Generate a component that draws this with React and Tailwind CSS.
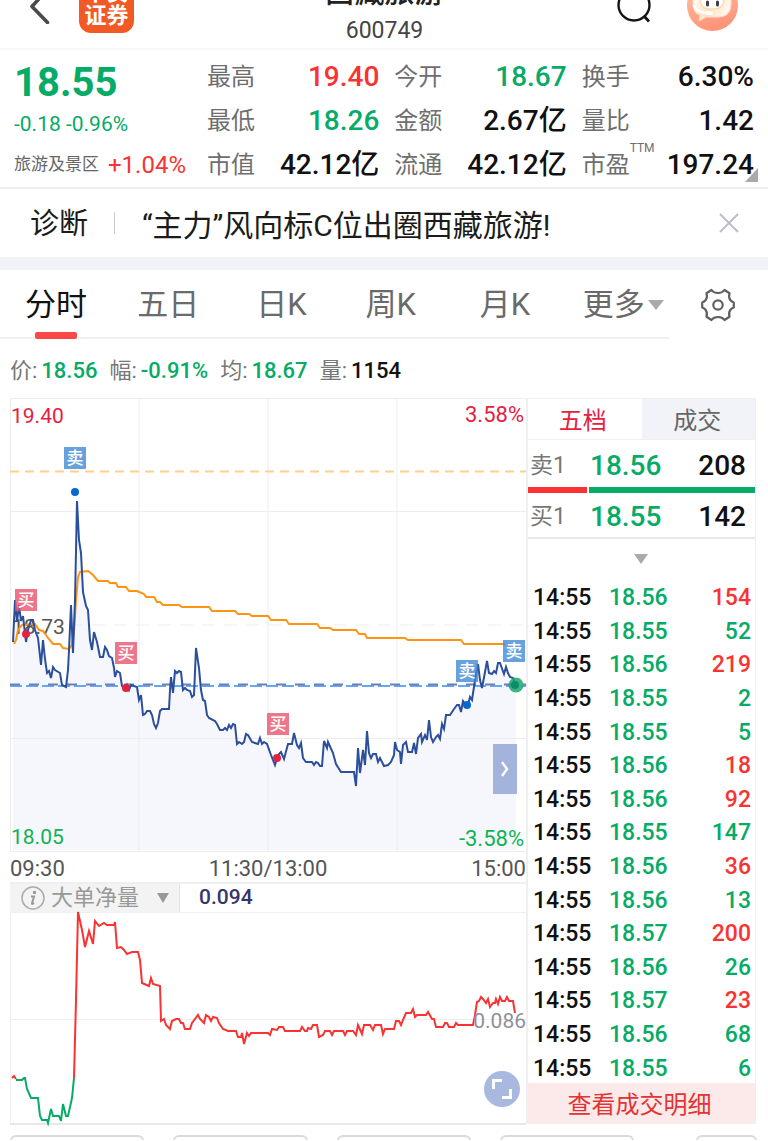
import React, { useState } from 'react';

const UP = 'text-[#fb3232]';
const DOWN = 'text-[#06ab67]';
const PLAIN = 'text-[#111]';

const STATS = [
  { label: '最高', value: '19.40', color: UP },
  { label: '今开', value: '18.67', color: DOWN },
  { label: '换手', value: '6.30%', color: PLAIN },
  { label: '最低', value: '18.26', color: DOWN },
  { label: '金额', value: '2.67亿', color: PLAIN },
  { label: '量比', value: '1.42', color: PLAIN },
  { label: '市值', value: '42.12亿', color: PLAIN },
  { label: '流通', value: '42.12亿', color: PLAIN },
  { label: '市盈', value: '197.24', color: PLAIN, note: 'TTM' },
];

const TABS = ['分时', '五日', '日K', '周K', '月K', '更多'];

const SUMMARY = [
  { label: '价:', value: '18.56', color: DOWN },
  { label: '幅:', value: '-0.91%', color: DOWN },
  { label: '均:', value: '18.67', color: DOWN },
  { label: '量:', value: '1154', color: PLAIN },
];

const TRADES = [
  { price: '18.56', volume: 154, buy: true },
  { price: '18.55', volume: 52 },
  { price: '18.56', volume: 219, buy: true },
  { price: '18.55', volume: 2 },
  { price: '18.55', volume: 5 },
  { price: '18.56', volume: 18, buy: true },
  { price: '18.56', volume: 92, buy: true },
  { price: '18.55', volume: 147 },
  { price: '18.56', volume: 36, buy: true },
  { price: '18.56', volume: 13 },
  { price: '18.57', volume: 200, buy: true },
  { price: '18.56', volume: 26 },
  { price: '18.57', volume: 23, buy: true },
  { price: '18.56', volume: 68 },
  { price: '18.55', volume: 6 },
];

// chart series, in the viewBox units of the two charts
const PRICE_LINE =
  '13,642 15,600 17,622 19,605 21,621 23,616 26,642 28,630 31,620 33,620 35,630 38,638 41,665 43,640 45,659 47,673 49,671 51,678 53,667 55,670 60,673 62,685 66,687 68,670 69,650 71,605 73,653 75,600 77,501 79,540 81,553 83,592 86,606 88,610 90,640 92,650 94,632 97,642 100,657 103,657 105,647 107,650 109,656 112,658 114,668 115,677 117,671 120,673 122,686 125,690 127,685 129,690 131,685 137,687 139,700 141,695 143,715 145,714 147,711 150,711 152,715 154,724 156,728 158,723 160,711 162,709 169,709 170,690 171,677 173,693 175,671 177,673 179,671 181,672 183,690 185,688 187,690 190,691 192,697 194,695 196,648 199,668 201,690 203,700 205,701 207,715 209,718 215,721 217,724 220,730 223,730 225,728 227,730 229,725 231,728 233,724 235,725 237,744 239,742 242,744 244,742 246,734 248,735 252,742 255,743 258,744 260,738 262,744 264,742 267,744 271,755 275,765 278,755 281,752 284,759 288,744 292,744 294,733 297,745 299,748 301,743 303,758 306,762 312,762 314,765 316,762 318,763 320,766 322,766 324,741 327,748 328,742 333,753 336,764 341,772 354,772 356,786 358,748 360,773 363,750 365,765 367,731 369,753 371,758 373,754 376,754 378,762 380,758 384,766 388,765 391,762 394,755 395,742 397,750 400,752 401,764 403,745 406,742 408,752 412,752 414,743 416,754 418,738 421,734 422,742 425,735 427,740 429,720 431,737 433,742 436,737 438,735 440,739 442,724 444,729 446,715 450,715 454,709 457,705 459,705 461,712 463,701 466,705 468,705 470,697 472,700 475,680 478,664 480,680 482,688 485,672 487,661 489,673 492,674 494,671 496,673 498,663 500,663 504,674 506,667 508,673 510,677 513,678 516,684';

const AVERAGE_LINE =
  '14,644 16,640 18,630 22,625 35,624 39,630 43,631 48,638 53,644 60,644 63,648 69,649 72,645 74,632 76,600 78,577 80,572 88,571 93,575 98,581 108,581 110,583 116,583 118,587 126,587 129,591 137,591 144,594 146,597 154,597 157,602 160,602 163,605 179,605 182,607 209,607 212,611 235,611 238,614 249,614 252,616 268,616 271,620 286,620 289,624 317,624 320,628 330,628 333,630 356,630 359,634 365,634 367,638 405,638 408,640 461,640 464,644 505,644';

const FLOW_OUT =
  '16,1080 22,1080 24,1078 25,1078 27,1089 31,1098 38,1098 40,1116 42,1120 47,1120 48,1123 51,1109 53,1116 59,1116 61,1121 63,1104 66,1116 68,1116 70,1107 72,1098 74,1078';

const FLOW_IN =
  '74,1078 76,1000 78,912 82,930 85,947 89,931 93,944 95,921 99,926 104,923 107,925 114,925 115,922 117,948 121,947 124,950 127,954 132,952 138,952 140,960 142,983 149,986 151,978 153,984 160,986 161,1021 164,1019 166,1025 170,1029 172,1021 176,1019 179,1019 181,1023 183,1023 185,1029 190,1029 192,1023 198,1015 200,1019 204,1023 206,1015 209,1017 211,1021 213,1017 217,1018 219,1023 223,1029 228,1031 236,1031 238,1037 241,1037 242,1033 244,1044 247,1033 249,1036 251,1033 268,1033 270,1035 272,1029 277,1030 279,1027 283,1027 285,1031 300,1031 302,1027 305,1031 307,1031 308,1028 311,1029 313,1025 317,1025 319,1037 323,1035 325,1031 330,1031 332,1035 334,1031 343,1031 345,1035 347,1031 353,1031 356,1035 358,1025 362,1034 364,1025 370,1025 373,1030 375,1025 381,1025 383,1034 385,1029 394,1029 396,1021 399,1021 401,1025 403,1020 406,1013 411,1013 413,1009 415,1017 417,1015 426,1015 428,1012 432,1019 434,1019 436,1027 443,1027 445,1023 447,1023 449,1027 454,1027 456,1023 458,1025 473,1025 475,1015 477,1002 479,1001 481,997 483,999 486,1003 488,999 490,1007 493,1003 495,1003 496,999 498,1004 500,997 502,1001 505,1001 507,997 509,1001 513,1001 515,1013';

const MARKERS = [
  { x: 64, y: 447, side: '卖', dot: [75, 492] },
  { x: 15, y: 589, side: '买', dot: [26, 634] },
  { x: 115, y: 642, side: '买', dot: [126, 688] },
  { x: 267, y: 713, side: '买', dot: [277, 758] },
  { x: 456, y: 660, side: '卖', dot: [467, 705] },
  { x: 503, y: 640, side: '卖' },
];

function Header() {
  return (
    <header className="relative flex h-[50px] items-end justify-between overflow-hidden border-b-2 border-[#f7f7f7] pl-[29px] pr-[30px]">
      <div className="flex items-end gap-[29px]">
        <button aria-label="返回" className="mb-[24px]">
          <svg width="21" height="36" viewBox="0 0 21 36" fill="none">
            <path d="M18 2 3 18.500 18.500 34.500" stroke="#4a4a4a" strokeWidth="3.600" strokeLinecap="round" strokeLinejoin="round" />
          </svg>
        </button>
        <div className="mb-[15px] flex h-[56px] w-[55px] flex-col items-center justify-end rounded-[12px] bg-[#f15a24] pb-[6px] text-[22px] font-bold leading-[23px] text-white">
          <span>华安</span>
          <span>证券</span>
        </div>
      </div>
      <div className="ml-[18px] flex flex-col items-center">
        <h1 className="pb-[8px] text-[30px] font-medium leading-[36px] text-[#222]">西藏旅游</h1>
        <p className="pb-[4px] text-[23px] leading-[26px] text-[#444]">600749</p>
      </div>
      <div className="flex items-end gap-[36px]">
        <button aria-label="搜索" className="mb-[24px]">
          <svg width="34" height="36" viewBox="0 0 34 36" fill="none" stroke="#151515" strokeWidth="2.400">
            <circle cx="17" cy="17" r="15.500" />
            <path d="m27 28 5 5.500" strokeWidth="2.800" />
          </svg>
        </button>
        <button aria-label="智能助手" className="mb-[17px]">
          <svg width="51" height="51" viewBox="0 0 51 51">
            <defs>
              <linearGradient id="botBg" x1="0" y1="0" x2="0.300" y2="1">
                <stop offset="0" stopColor="#ffc7ab" />
                <stop offset="1" stopColor="#ff9478" />
              </linearGradient>
              <linearGradient id="botFace" x1="0" y1="0" x2="1" y2="0.300">
                <stop offset="0" stopColor="#ffffff" />
                <stop offset="0.550" stopColor="#ffe3bd" />
                <stop offset="1" stopColor="#fff7ef" />
              </linearGradient>
            </defs>
            <circle cx="25.500" cy="25.500" r="25.500" fill="url(#botBg)" />
            <path d="M6 24c0 6 3 10 7 11l-1 6 7-4h12c8 0 13-4 13-13V14H6z" fill="url(#botFace)" stroke="#ffd9c9" strokeWidth="1" />
            <rect x="13" y="8" width="24" height="21" rx="9" fill="#fff" stroke="#ffd8b8" strokeWidth="1.500" />
            <path d="M20.500 22v3M30.500 22v3" stroke="#40404c" strokeWidth="3" strokeLinecap="round" />
            <path d="M7 26c3 6 9 7 15 7" stroke="#fff" strokeWidth="2.500" strokeLinecap="round" fill="none" />
            <ellipse cx="22" cy="33" rx="4" ry="2" fill="#fff" />
          </svg>
        </button>
      </div>
    </header>
  );
}

function Quote() {
  return (
    <section className="relative flex border-b-2 border-[#ededf3] pl-[14px] pr-[14px]">
      <div className="w-[193px] shrink-0 pt-[8px]">
        <p className={`flex h-[50px] items-center text-[40px] font-bold ${DOWN}`}>18.55</p>
        <p className={`flex h-[34px] items-center text-[21px] ${DOWN}`}>-0.18 -0.96%</p>
        <p className="flex h-[45px] items-center gap-[9px]">
          <span className="text-[17px] text-[#666]">旅游及景区</span>
          <span className={`text-[24px] ${UP}`}>+1.04%</span>
        </p>
      </div>
      <dl className="grid flex-1 grid-cols-3 gap-x-[15px] pt-[5px]">
        {STATS.map((s) => (
          <div key={s.label} className="flex h-[44px] items-center justify-between">
            <dt className="relative text-[24px] text-[#6e6e6e]">
              {s.label}
              {s.note && <sup className="absolute -top-[5px] left-full text-[12px] leading-none">{s.note}</sup>}
            </dt>
            <dd className={`text-[28px] font-medium ${s.color}`}>{s.value}</dd>
          </div>
        ))}
      </dl>
      <span className="absolute bottom-[5px] right-[10px] border-b-[14px] border-l-[13px] border-b-[#aaa] border-l-transparent" />
    </section>
  );
}

function Diagnosis() {
  return (
    <section className="flex h-[68px] items-center pl-[30px] pr-[29px] text-[#1b1b1b]">
      <span className="pt-[4px] text-[29px]">诊断</span>
      <span className="ml-[26px] mr-[27px] h-[22px] w-px bg-[#ccc]" />
      <a href="#diagnosis" className="pt-[4px] text-[30px]">“主力”风向标C位出圈西藏旅游!</a>
      <button aria-label="关闭" className="ml-auto">
        <svg width="20" height="20" viewBox="0 0 20 20" stroke="#bcbccd" strokeWidth="2">
          <path d="m1 1 18 18M19 1 1 19" />
        </svg>
      </button>
    </section>
  );
}

function PeriodTabs() {
  const [active, setActive] = useState('分时');

  return (
    <nav className="flex h-[69px] border-t-[13px] border-[#f2f3f9] box-content">
      <div className="grid flex-1 grid-cols-[112fr_119fr_109fr_114fr_103fr_86fr] border-b-2 border-[#f0f0f0] pl-[25px]">
        {TABS.map((tab) => (
          <button
            key={tab}
            onClick={() => setActive(tab)}
            className={`relative flex items-center justify-self-start pt-[3px] text-[31px] ${active === tab ? 'text-[#111]' : 'text-[#6a6a6a]'}`}
          >
            {tab}
            {tab === '更多' && (
              <span className="ml-[3px] border-x-[8px] border-t-[10px] border-x-transparent border-t-[#aaa]" />
            )}
            {active === tab && (
              <span className="absolute inset-x-[10px] -bottom-[2px] h-[7px] rounded-[2px] bg-[#f94848]" />
            )}
          </button>
        ))}
      </div>
      <button aria-label="设置" className="ml-[32px] mr-[33px] self-center">
        <svg width="34" height="34" viewBox="0 0 34 34" fill="none" stroke="#606060" strokeWidth="2.200" strokeLinejoin="round">
          <path d="M10.500 2c1.500 2.200 3.800 3 6.500 3s5-.8 6.500-3l5 3.200c-.8 2.800-.5 5 .8 6.800 1 1.300 2 2.100 3.500 2.500v5c-1.500.4-2.500 1.200-3.500 2.500-1.300 1.800-1.600 4-.8 6.800l-5 3.200c-1.500-2.200-3.800-3-6.500-3s-5 .8-6.500 3l-5-3.200c.8-2.800.5-5-.8-6.800-1-1.300-2-2.100-3.500-2.500v-5c1.500-.4 2.500-1.200 3.500-2.500 1.300-1.800 1.600-4 .8-6.800z" />
          <circle cx="17" cy="17" r="4.700" />
        </svg>
      </button>
    </nav>
  );
}

function PriceChart() {
  return (
    <div className="relative">
      <svg viewBox="10 398 516 454" className="block w-full">
        <polygon points={`13,850 ${PRICE_LINE} 516,850`} fill="#f5f7fc" />
        <g stroke="#ededed" strokeWidth="1" fill="none">
          <path d="M10 398.500H526M10 511.500H526M10 738.500H526M10 851.500H526" />
          <path d="M10.500 398V852M139 398V852M268 398V852M397 398V852" />
          <path d="M70 625H526" strokeDasharray="13 9" />
        </g>
        <path d="M10 471.500H526" stroke="#ffcf8c" strokeWidth="2" strokeDasharray="9 6" />
        <path d="M10 686H526" stroke="#62a8f7" strokeWidth="2" strokeDasharray="12 4" />
        <path d="M10 684.500H526" stroke="#6f7fb5" strokeWidth="2" strokeDasharray="10 9" />
        <text x="12" y="634" fontSize="21" fill="#555">18.73</text>
        <polyline points={AVERAGE_LINE} fill="none" stroke="#ff9412" strokeWidth="2" />
        <polyline points={PRICE_LINE} fill="none" stroke="#2b4f9b" strokeWidth="2" />
        <circle cx="516" cy="685" r="7.500" fill="#1aa86c" fillOpacity="0.850" />
        <circle cx="515" cy="685" r="4" fill="#0e8b6b" />
        {MARKERS.map((m) => (
          <g key={`${m.x}-${m.y}`}>
            <rect
              x={m.x}
              y={m.y}
              width="22"
              height="22"
              fill={m.side === '买' ? '#e8506a' : '#3d88d5'}
              fillOpacity="0.780"
            />
            <text x={m.x + 11} y={m.y + 17} fontSize="17" fontWeight="500" textAnchor="middle" fill="#fff">{m.side}</text>
            {m.dot && <circle cx={m.dot[0]} cy={m.dot[1]} r="4" fill={m.side === '买' ? '#e6213f' : '#0868cf'} />}
          </g>
        ))}
      </svg>
      <span className="absolute left-px top-[6px] text-[21px] leading-[24px] text-[#e6213f]">19.40</span>
      <span className="absolute right-[2px] top-[5px] text-[22px] leading-[24px] text-[#e6213f]">3.58%</span>
      <span className="absolute bottom-[3px] left-px text-[21px] leading-[24px] text-[#0fb351]">18.05</span>
      <span className="absolute bottom-[1px] right-[2px] text-[22px] leading-[24px] text-[#0fb351]">-3.58%</span>
      <button aria-label="展开" className="absolute bottom-[58px] right-[9px] flex h-[50px] w-[24px] items-center justify-center bg-[#a4b3dc]">
        <svg width="8" height="16" viewBox="0 0 8 16" fill="none" stroke="#fff" strokeWidth="2.400">
          <path d="m1 1 5 7-5 7" />
        </svg>
      </button>
    </div>
  );
}

function FlowChart() {
  return (
    <>
      <div className="flex h-[31px] items-center border-b border-t-2 border-[#efefef]">
        <div className="relative flex h-full w-[170px] items-center border-r border-[#e5e5e5] bg-[#f3f3f3] pl-[11px]">
          <svg width="24" height="24" viewBox="0 0 24 24" fill="none" stroke="#aaa" strokeWidth="1.500" aria-hidden="true">
            <circle cx="12" cy="12" r="11" />
            <path d="M10 10.500h3l-2 7q0 1 2-.5" stroke="#999" strokeWidth="2" />
            <circle cx="13.500" cy="6.500" r="1" fill="#999" stroke="#999" />
          </svg>
          <select aria-label="指标" className="ml-[6px] w-[118px] appearance-none bg-transparent text-[22px] leading-[28px] text-[#999]">
            <option>大单净量</option>
          </select>
          <span className="pointer-events-none absolute right-[10px] border-x-[6px] border-t-[10px] border-x-transparent border-t-[#999]" />
        </div>
        <span className="ml-[19px] text-[21px] font-medium text-[#37356a]">0.094</span>
      </div>
      <div className="relative">
        <svg viewBox="10 913 516 211" className="block w-full overflow-visible">
          <path d="M10.500 913V1124M10 1019.500H526" stroke="#efefef" fill="none" />
          <path d="M10 1124H526" stroke="#e8e8e8" strokeWidth="2" />
          <polyline points="12,1078 14,1076 16,1079" fill="none" stroke="#fb3232" strokeWidth="2" />
          <polyline points={FLOW_OUT} fill="none" stroke="#06ab67" strokeWidth="2" />
          <polyline points={FLOW_IN} fill="none" stroke="#fb3232" strokeWidth="2" />
        </svg>
        <span className="absolute right-0 top-[96px] text-[21px] leading-[24px] text-[#909099]">0.086</span>
        <button aria-label="全屏" className="absolute bottom-[17px] right-[6px] flex size-[36px] items-center justify-center rounded-full bg-[#a8b8df]">
          <svg width="20" height="20" viewBox="0 0 20 20" fill="none" stroke="#fff" strokeWidth="3">
            <path d="M1.500 10V1.500H10M18.500 10v8.500H10" />
          </svg>
        </button>
      </div>
    </>
  );
}

function OrderPanel() {
  return (
    <aside className="w-[230px] shrink-0 border border-l-2 border-[#efefef]">
      <div className="flex h-[41px] border-b border-[#efefef] text-[24px]">
        <button className="w-1/2 pt-[4px] pr-[4px] text-[#e6213f]">五档</button>
        <button className="w-1/2 bg-[#f2f3f8] pt-[4px] pr-[2px] text-[#666]">成交</button>
      </div>
      <div className="flex h-[47px] items-center pl-[2px] pr-[9px] pt-[5px]">
        <span className="w-[60px] text-[23px] text-[#777]">卖1</span>
        <span className={`text-[28px] font-medium ${DOWN}`}>18.56</span>
        <span className="ml-auto text-[28px] font-medium text-[#111]">208</span>
      </div>
      <div className="flex h-[6px] gap-[2px]">
        <span className="w-[26%] bg-[#fb3232]" />
        <span className="flex-1 bg-[#06ab67]" />
      </div>
      <div className="flex h-[46px] items-center border-b-2 border-[#e9e9e9] pl-[2px] pr-[9px] pt-[4px]">
        <span className="w-[60px] text-[23px] text-[#777]">买1</span>
        <span className={`text-[28px] font-medium ${DOWN}`}>18.55</span>
        <span className="ml-auto text-[28px] font-medium text-[#111]">142</span>
      </div>
      <button aria-label="展开盘口" className="flex h-[40px] w-full items-center justify-center pr-[2px]">
        <span className="border-x-[7px] border-t-[10px] border-x-transparent border-t-[#aaa]" />
      </button>
      <table className="h-[504px] w-full text-[23px] font-medium leading-none">
        <tbody>
          {TRADES.map((t, i) => (
            <tr key={i}>
              <td className="w-[81px] pl-[5px] pt-[4px] text-[#111]">14:55</td>
              <td className={`pt-[4px] ${DOWN}`}>{t.price}</td>
              <td className={`pr-[4px] pt-[4px] text-right ${t.buy ? UP : DOWN}`}>{t.volume}</td>
            </tr>
          ))}
        </tbody>
      </table>
      <button className="h-[40px] w-full bg-[#fce9e9] pr-[4px] pt-[3px] text-[24px] text-[#e23434]">查看成交明细</button>
    </aside>
  );
}

export default function App() {
  return (
    <main className="overflow-hidden bg-white font-['Roboto','Noto_Sans_CJK_SC',sans-serif]">
      <Header />
      <Quote />
      <Diagnosis />
      <PeriodTabs />
      <dl className="flex h-[59px] items-center gap-[12px] pl-[10px] pt-[4px] text-[22px]">
        {SUMMARY.map((s) => (
          <div key={s.label} className="flex items-center gap-[4px]">
            <dt className="text-[#777]">{s.label}</dt>
            <dd className={`font-medium ${s.color}`}>{s.value}</dd>
          </div>
        ))}
      </dl>
      <div className="flex items-start pl-[10px] pr-[12px]">
        <div className="min-w-0 flex-1">
          <PriceChart />
          <div className="flex h-[30px] items-center justify-between pt-[2px] text-[22px] text-[#555]">
            <span>09:30</span>
            <span>11:30/13:00</span>
            <span>15:00</span>
          </div>
          <FlowChart />
        </div>
        <OrderPanel />
      </div>
      <div className="flex h-[16px] gap-[29px] overflow-hidden pl-[10px] pr-[11px] pt-[11px]">
        {[0, 1, 2, 3].map((n) => (
          <span key={n} className="h-[40px] flex-1 rounded-[6px] border-2 border-[#dadada]" />
        ))}
        <span className="ml-[33px] h-[40px] w-[61px] rounded-[6px] border-2 border-[#dadada]" />
      </div>
    </main>
  );
}
